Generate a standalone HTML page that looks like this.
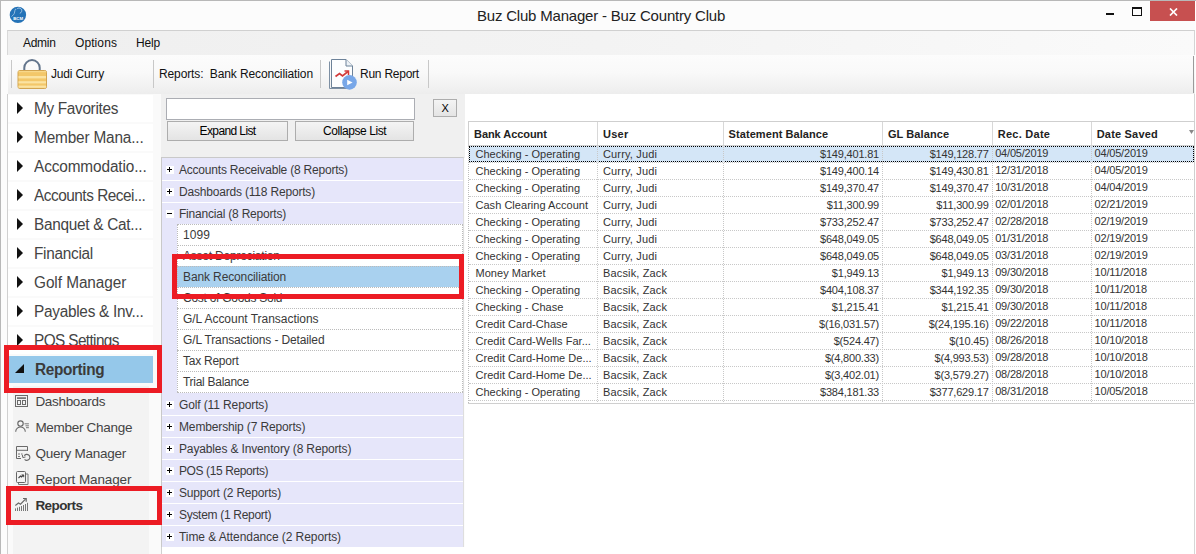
<!DOCTYPE html>
<html><head><meta charset="utf-8"><title>Buz Club Manager - Buz Country Club</title>
<style>
html,body{margin:0;padding:0;}
body{width:1196px;height:554px;position:relative;overflow:hidden;background:#fcfcfc;font-family:"Liberation Sans",sans-serif;color:#000;}
.a{position:absolute;white-space:nowrap;}
.ui{font-family:"Liberation Sans",sans-serif;font-size:12px;line-height:16px;color:#111;}
.nav{left:8px;width:145px;height:27px;background:#fff;}
.navt{left:34px;font-size:16px;color:#444;line-height:27px;}
.tri{width:0;height:0;border-left:6.5px solid #111;border-top:6px solid transparent;border-bottom:6px solid transparent;}
.subt{left:35.4px;font-size:13.5px;color:#444;line-height:20px;}
.cat{left:162px;width:301px;height:21px;background:#e6e6fa;}
.catt{left:179px;font-size:12px;color:#3a3a3a;line-height:21px;}
.pm{left:165.5px;width:8px;height:8px;background:#fff;}
.pm i{position:absolute;left:1.5px;top:3.3px;width:5px;height:1.4px;background:#000;}
.pm b{position:absolute;left:3.3px;top:1.5px;width:1.4px;height:5px;background:#000;}
.ch{left:177px;width:286px;height:20px;background:#fff;border-top:1px dotted #bbb;}
.cht{left:183px;font-size:12px;color:#3a3a3a;line-height:21px;}
.th{font-weight:bold;font-size:11px;color:#222;line-height:24px;top:122px;}
.td{font-size:11px;color:#333;line-height:17px;}
.c0{letter-spacing:0.03px}.c1{letter-spacing:0.15px}.c2,.c3{letter-spacing:-0.2px}.c4,.c5{letter-spacing:-0.2px}
.vl{width:0;border-left:1px dotted #c8c8c8;top:146px;height:256px;}
.hl{height:0;border-top:1px dotted #c8c8c8;left:469px;width:726px;}
.red{border:5px solid #ec1c24;box-sizing:border-box;}
.btn{border:1px solid #adadad;background:linear-gradient(#f4f4f4,#e4e4e4);box-sizing:border-box;}
.btnt{font-size:12px;color:#000;line-height:16px;}
</style></head><body>

<div class="a" style="left:0;top:0;width:1196px;height:1px;background:#b8b8b8"></div>
<div class="a" style="left:0;top:0;width:1px;height:554px;background:#b8b8b8"></div>
<div class="a" style="left:1195px;top:1px;width:1px;height:553px;background:#fff"></div>
<svg class="a" style="left:9px;top:6px" width="18" height="18" viewBox="0 0 18 18">
<circle cx="8.900" cy="8.900" r="8.200" fill="#2573b7"/>
<path d="M7.800 3.200 A2.700 2.700 0 1 1 10.800 7.300" fill="none" stroke="#cfe2f3" stroke-width="0.700"/>
<path d="M6.700 2.800 C5.200 5 6 7.300 4.500 8.700 L2.500 10.500" fill="none" stroke="#a9cbe8" stroke-width="0.800"/>
<text x="9.100" y="13.700" text-anchor="middle" font-family="Liberation Sans, sans-serif" font-weight="bold" font-size="4.300" fill="#fff">BCM</text>
</svg>
<div id="t1" class="a " style="left:477px;top:6px;font-size:15px;line-height:20px;color:#222;letter-spacing:-0.20px">Buz Club Manager - Buz Country Club</div>
<div class="a" style="left:1106px;top:13px;width:8px;height:2px;background:#111"></div>
<div class="a" style="left:1132px;top:7px;width:8px;height:6px;border:1px solid #111;border-top-width:2px;box-sizing:content-box"></div>
<div class="a" style="left:1150px;top:1px;width:45px;height:20px;background:#c75050"></div>
<svg class="a" style="left:1168.5px;top:7.5px" width="9" height="8" viewBox="0 0 9 8"><path d="M1 0.5 L8 7.5 M8 0.5 L1 7.5" stroke="#fff" stroke-width="1.7" fill="none"/></svg>
<div class="a" style="left:7px;top:30px;width:1188px;height:25px;border-right:1px solid #d4d4d4;background:linear-gradient(90deg,#efefef,#f3f3f3 50%,#fafafa);border-top:1px solid #d0d0d0;border-left:1px solid #d9d9d9;box-sizing:border-box"></div>
<div id="t2" class="a ui" style="left:23px;top:35px;letter-spacing:-0.30px">Admin</div>
<div id="t3" class="a ui" style="left:75px;top:35px;letter-spacing:0.09px">Options</div>
<div id="t4" class="a ui" style="left:136px;top:35px;letter-spacing:-0.17px">Help</div>
<div class="a" style="left:8px;top:55px;width:1187px;height:39px;background:linear-gradient(#fcfcfc,#f9f9f9 45%,#ededed)"></div>
<div class="a" style="left:1193px;top:56px;width:1px;height:37px;background:#9a9a9a"></div>
<div class="a" style="left:11px;top:60px;width:1px;height:28px;background:#c8c8c8"></div>
<svg class="a" style="left:17px;top:58px" width="32" height="32" viewBox="0 0 32 32">
<path d="M7.300 13 V9.800 A7.700 7.700 0 0 1 22.700 9.800 V13" fill="none" stroke="#63758c" stroke-width="2"/>
<rect x="1" y="12.500" width="28.500" height="18" rx="1.800" fill="#f3c769" stroke="#d2a450" stroke-width="1"/>
<rect x="1.500" y="18" width="27.500" height="2.400" fill="#fbe3a2"/><rect x="1.500" y="23.200" width="27.500" height="2.200" fill="#fbe3a2"/><rect x="1.500" y="27.600" width="27.500" height="2.200" fill="#fbe3a2"/>
<rect x="1.500" y="13" width="27.500" height="1.200" fill="#f8d88a"/>
</svg>
<div id="t5" class="a ui" style="left:51px;top:66px;letter-spacing:-0.17px">Judi Curry</div>
<div class="a" style="left:153px;top:60px;width:1px;height:28px;background:#c8c8c8"></div>
<div id="t6" class="a ui" style="left:159px;top:66px;letter-spacing:-0.12px">Reports:&nbsp; Bank Reconciliation</div>
<div class="a" style="left:320px;top:60px;width:1px;height:28px;background:#c8c8c8"></div>
<svg class="a" style="left:328px;top:58px" width="32" height="34" viewBox="0 0 32 34">
<path d="M1.500 3.500 V30.500 H21" fill="none" stroke="#7d8fa3" stroke-width="1"/>
<path d="M3.500 1.500 H18 L24.500 8 V29.500 H3.500 Z" fill="#fdfeff" stroke="#6d8299" stroke-width="1"/>
<path d="M18 1.500 V8 H24.500" fill="#eef3f8" stroke="#6d8299" stroke-width="1"/>
<path d="M7.500 18.500 L11.500 15.500 L14.500 18 L20 13.500" fill="none" stroke="#d23a3a" stroke-width="1.700"/>
<path d="M16.500 13 H20.500 V17" fill="none" stroke="#d23a3a" stroke-width="1.500"/>
<circle cx="21.500" cy="24.400" r="7.300" fill="#78a7e8"/>
<path d="M19.200 21.700 L24.600 24.400 L19.200 27.200 Z" fill="#fff"/>
</svg>
<div id="t7" class="a ui" style="left:360px;top:66px;letter-spacing:-0.24px">Run Report</div>
<div class="a" style="left:428px;top:60px;width:1px;height:28px;background:#c8c8c8"></div>
<div class="a" style="left:7px;top:94px;width:1px;height:460px;background:#d0d0d0"></div>
<div class="a" style="left:8px;top:94px;width:153px;height:460px;background:#fafafa"></div>
<div class="a nav" style="top:95px"></div><div class="a tri" style="left:17px;top:102px"></div>
<div id="t8" class="a navt" style="top:95px;transform:scaleX(0.96);transform-origin:0 0;letter-spacing:-0.34px">My Favorites</div>
<div class="a nav" style="top:124px"></div><div class="a tri" style="left:17px;top:131px"></div>
<div id="t9" class="a navt" style="top:124px;transform:scaleX(0.96);transform-origin:0 0;letter-spacing:-0.17px">Member Mana...</div>
<div class="a nav" style="top:153px"></div><div class="a tri" style="left:17px;top:160px"></div>
<div id="t10" class="a navt" style="top:153px;transform:scaleX(0.96);transform-origin:0 0;letter-spacing:-0.12px">Accommodatio...</div>
<div class="a nav" style="top:182px"></div><div class="a tri" style="left:17px;top:189px"></div>
<div id="t11" class="a navt" style="top:182px;transform:scaleX(0.96);transform-origin:0 0;letter-spacing:-0.50px">Accounts Recei...</div>
<div class="a nav" style="top:211px"></div><div class="a tri" style="left:17px;top:218px"></div>
<div id="t12" class="a navt" style="top:211px;transform:scaleX(0.96);transform-origin:0 0;letter-spacing:-0.29px">Banquet &amp; Cat...</div>
<div class="a nav" style="top:240px"></div><div class="a tri" style="left:17px;top:247px"></div>
<div id="t13" class="a navt" style="top:240px;transform:scaleX(0.96);transform-origin:0 0;letter-spacing:-0.29px">Financial</div>
<div class="a nav" style="top:269px"></div><div class="a tri" style="left:17px;top:276px"></div>
<div id="t14" class="a navt" style="top:269px;transform:scaleX(0.96);transform-origin:0 0;letter-spacing:-0.06px">Golf Manager</div>
<div class="a nav" style="top:298px"></div><div class="a tri" style="left:17px;top:305px"></div>
<div id="t15" class="a navt" style="top:298px;transform:scaleX(0.96);transform-origin:0 0;letter-spacing:-0.28px">Payables &amp; Inv...</div>
<div class="a nav" style="top:327px"></div><div class="a tri" style="left:17px;top:334px"></div>
<div id="t16" class="a navt" style="top:327px;transform:scaleX(0.96);transform-origin:0 0;letter-spacing:-0.64px">POS Settings</div>
<div class="a nav" style="top:356px;background:#95c8ea"></div>
<svg class="a" style="left:15px;top:364px" width="9" height="9"><path d="M0 9 H9 V0 Z" fill="#111"/></svg>
<div id="t17" class="a navt" style="top:356px;font-weight:bold;color:#3b3b3b;left:34.6px;transform:scaleX(0.96);transform-origin:0 0;letter-spacing:-0.37px">Reporting</div>
<div class="a" style="left:13px;top:386px;width:136px;height:168px;background:#f3f3f3"></div>
<svg class="a" style="left:15px;top:395px" width="16" height="16" viewBox="0 0 16 16"><rect x="0.5" y="0.5" width="12" height="11" fill="none" stroke="#6a6a6a"/><rect x="2" y="2.300" width="9" height="1.600" fill="#6a6a6a"/><rect x="2.500" y="5.500" width="3" height="4" fill="none" stroke="#6a6a6a"/><rect x="7.500" y="5.500" width="3" height="4" fill="none" stroke="#6a6a6a"/></svg>
<div id="t18" class="a subt" style="top:392px;letter-spacing:-0.31px">Dashboards</div>
<svg class="a" style="left:15px;top:420px" width="16" height="16" viewBox="0 0 16 16"><circle cx="5.500" cy="3.600" r="2.700" fill="none" stroke="#666" stroke-width="1.1"/><path d="M0.700 11.700 C0.700 8.500 3.500 7 5.500 7 S10.300 8.500 10.300 11.700" fill="none" stroke="#666" stroke-width="1.1"/><path d="M9.500 3.800 H13.900 M10.500 5.800 H13.900 M11 7.700 H13.900" stroke="#777" stroke-width="1"/></svg>
<div id="t19" class="a subt" style="top:418px;letter-spacing:-0.29px">Member Change</div>
<svg class="a" style="left:15px;top:446px" width="16" height="16" viewBox="0 0 16 16"><path d="M12.500 5 V0.500 H1.500 V12.500 H6" fill="none" stroke="#6a6a6a"/><path d="M1.500 4.300 H12.500" stroke="#6a6a6a"/><path d="M3 8 H5 M6 8 H7.500 M3 10.500 H5" stroke="#777"/><path d="M9.600 13.300 A3 3 0 1 0 9.300 9.800" fill="none" stroke="#666" stroke-width="1.100"/><path d="M7.300 8.800 L7.800 11.500 L10.500 11" fill="none" stroke="#666" stroke-width="1"/></svg>
<div id="t20" class="a subt" style="top:444px;letter-spacing:-0.25px">Query Manager</div>
<svg class="a" style="left:15px;top:470px" width="16" height="16" viewBox="0 0 16 16"><path d="M3.500 12.500 V14.500 H13 V4 H10.500" fill="none" stroke="#777"/><rect x="1.500" y="1.500" width="9" height="11" rx="1" fill="none" stroke="#666"/><path d="M3.500 8 L5.500 6 L6.500 7 L8.500 5" fill="none" stroke="#444" stroke-width="1.100"/><path d="M6.500 5 H8.700 V7.200" fill="none" stroke="#444"/></svg>
<div id="t21" class="a subt" style="top:470px;letter-spacing:-0.11px">Report Manager</div>
<div class="a" style="left:11px;top:491px;width:138px;height:29px;background:#f3f3f3"></div>
<svg class="a" style="left:15px;top:497px" width="16" height="16" viewBox="0 0 16 16"><path d="M0.500 14 V11.400 M2.500 14 V10.600 M4.500 14 V9.800 M6.500 14 V9 M8.500 14 V8 M10.500 14 V7 M12.500 14 V5.800" stroke="#777" stroke-width="1"/><path d="M0.300 8.500 L3.500 6 L5.500 7.200 L10.500 2.200" fill="none" stroke="#666" stroke-width="1.200"/><path d="M8 1.500 H11.200 V4.700" fill="none" stroke="#666" stroke-width="1.200"/></svg>
<div id="t22" class="a subt" style="top:496px;font-weight:bold;color:#333;letter-spacing:-0.57px">Reports</div>
<div class="a" style="left:161px;top:547px;width:304px;height:7px;background:#fff"></div>
<div class="a" style="left:161px;top:547px;width:1px;height:7px;background:#d0d0d0"></div>
<div class="a" style="left:161px;top:94px;width:304px;height:64px;background:#f0f0f0"></div>
<div class="a" style="left:166px;top:98px;width:249px;height:22px;box-sizing:border-box;border:1px solid #abadb3;background:#fff"></div>
<div class="a btn" style="left:433px;top:99px;width:24px;height:18px"></div>
<div id="t23" class="a btnt" style="left:441.5px;top:100px;font-size:11px">X</div>
<div class="a btn" style="left:167px;top:121px;width:121px;height:20px"></div>
<div id="t24" class="a btnt" style="left:199.5px;top:123px;letter-spacing:-0.60px">Expand List</div>
<div class="a btn" style="left:295px;top:121px;width:119px;height:20px"></div>
<div id="t25" class="a btnt" style="left:322.9px;top:123px;letter-spacing:-0.41px">Collapse List</div>
<div class="a" style="left:161px;top:157px;width:303px;height:390px;background:#fff;border:1px solid #c9c9c9;border-right-color:#dedede;border-bottom:none;box-sizing:border-box"></div>
<div class="a" style="left:162px;top:224px;width:15px;height:169px;background:#e6e6fa"></div>
<div class="a cat" style="top:158px;height:22px"></div>
<div class="a pm" style="top:165.5px"><i></i><b></b></div>
<div id="t26" class="a catt" style="top:159.5px;letter-spacing:-0.21px">Accounts Receivable (8 Reports)</div>
<div class="a cat" style="top:181px;height:21px"></div>
<div class="a pm" style="top:187.5px"><i></i><b></b></div>
<div id="t27" class="a catt" style="top:181.5px;letter-spacing:-0.19px">Dashboards (118 Reports)</div>
<div class="a cat" style="top:203px;height:21px"></div>
<div class="a pm" style="top:209.5px"><i></i></div>
<div id="t28" class="a catt" style="top:203.5px;letter-spacing:-0.21px">Financial (8 Reports)</div>
<div class="a ch" style="top:224px"></div>
<div id="t29" class="a cht" style="top:224.5px;letter-spacing:0.10px">1099</div>
<div class="a ch" style="top:245px"></div>
<div id="t30" class="a cht" style="top:245.5px;letter-spacing:-0.22px">Asset Depreciation</div>
<div class="a ch" style="top:266px;background:#a9d1ef"></div>
<div id="t31" class="a cht" style="top:266.5px;letter-spacing:-0.12px">Bank Reconciliation</div>
<div class="a ch" style="top:287px"></div>
<div id="t32" class="a cht" style="top:287.5px;letter-spacing:-0.27px">Cost of Goods Sold</div>
<div class="a ch" style="top:308px"></div>
<div id="t33" class="a cht" style="top:308.5px;letter-spacing:-0.03px">G/L Account Transactions</div>
<div class="a ch" style="top:329px"></div>
<div id="t34" class="a cht" style="top:329.5px;letter-spacing:-0.13px">G/L Transactions - Detailed</div>
<div class="a ch" style="top:350px"></div>
<div id="t35" class="a cht" style="top:350.5px;letter-spacing:-0.25px">Tax Report</div>
<div class="a ch" style="top:371px"></div>
<div id="t36" class="a cht" style="top:371.5px;letter-spacing:-0.28px">Trial Balance</div>
<div class="a" style="left:177px;top:224px;width:0;height:168px;border-left:1px dotted #bbb"></div>
<div class="a" style="left:177px;top:392px;width:286px;height:0;border-top:1px dotted #bbb"></div>
<div class="a" style="left:462px;top:224px;width:0;height:168px;border-left:1px dotted #bbb"></div>
<div class="a cat" style="top:393px;height:22px"></div>
<div class="a pm" style="top:400.5px"><i></i><b></b></div>
<div id="t37" class="a catt" style="top:394.5px;letter-spacing:-0.12px">Golf (11 Reports)</div>
<div class="a cat" style="top:416px;height:21px"></div>
<div class="a pm" style="top:422.5px"><i></i><b></b></div>
<div id="t38" class="a catt" style="top:416.5px;letter-spacing:-0.14px">Membership (7 Reports)</div>
<div class="a cat" style="top:438px;height:21px"></div>
<div class="a pm" style="top:444.5px"><i></i><b></b></div>
<div id="t39" class="a catt" style="top:438.5px;letter-spacing:-0.14px">Payables &amp; Inventory (8 Reports)</div>
<div class="a cat" style="top:460px;height:21px"></div>
<div class="a pm" style="top:466.5px"><i></i><b></b></div>
<div id="t40" class="a catt" style="top:460.5px;letter-spacing:-0.39px">POS (15 Reports)</div>
<div class="a cat" style="top:482px;height:21px"></div>
<div class="a pm" style="top:488.5px"><i></i><b></b></div>
<div id="t41" class="a catt" style="top:482.5px;letter-spacing:-0.18px">Support (2 Reports)</div>
<div class="a cat" style="top:504px;height:21px"></div>
<div class="a pm" style="top:510.5px"><i></i><b></b></div>
<div id="t42" class="a catt" style="top:504.5px;letter-spacing:-0.30px">System (1 Report)</div>
<div class="a cat" style="top:526px;height:21px"></div>
<div class="a pm" style="top:532.5px"><i></i><b></b></div>
<div id="t43" class="a catt" style="top:526.5px;letter-spacing:-0.08px">Time &amp; Attendance (2 Reports)</div>
<div class="a" style="left:465px;top:94px;width:731px;height:460px;background:#fff"></div>
<div class="a" style="left:1194px;top:94px;width:1px;height:460px;background:#d6d6d6"></div>
<div class="a" style="left:468px;top:121px;width:727px;height:283px;border:1px solid #cfcfcf;border-left:none;box-sizing:border-box"></div>
<div class="a" style="left:468px;top:121px;width:1px;height:25px;background:#cfcfcf"></div>
<div class="a" style="left:468px;top:146px;width:0;height:257px;border-left:1px dotted #bdbdbd"></div>
<div id="t44" class="a th" style="left:474px;letter-spacing:-0.06px">Bank Account</div>
<div id="t45" class="a th" style="left:602.9px;letter-spacing:0.31px">User</div>
<div class="a" style="left:597px;top:122px;width:1px;height:24px;background:#d8d8d8"></div>
<div id="t46" class="a th" style="left:728.6px;letter-spacing:0.07px">Statement Balance</div>
<div class="a" style="left:723px;top:122px;width:1px;height:24px;background:#d8d8d8"></div>
<div id="t47" class="a th" style="left:887.9px;letter-spacing:0.09px">GL Balance</div>
<div class="a" style="left:882px;top:122px;width:1px;height:24px;background:#d8d8d8"></div>
<div id="t48" class="a th" style="left:997.7px;letter-spacing:0.27px">Rec. Date</div>
<div class="a" style="left:992px;top:122px;width:1px;height:24px;background:#d8d8d8"></div>
<div id="t49" class="a th" style="left:1096.7px;letter-spacing:0.20px">Date Saved</div>
<div class="a" style="left:1091px;top:122px;width:1px;height:24px;background:#d8d8d8"></div>
<div class="a" style="left:469px;top:145px;width:726px;height:1px;background:#d0d0d0"></div>
<div class="a" style="left:469px;top:146px;width:725px;height:16px;background:#d4e6f7;border:1px dotted #000;box-sizing:border-box"></div>
<div id="r0c0" class="a td c0" style="left:475.5px;top:146px">Checking - Operating</div>
<div id="r0c1" class="a td c1" style="left:603px;top:146px">Curry, Judi</div>
<div id="r0c2" class="a td c2" style="right:317px;top:146px">$149,401.81</div>
<div id="r0c3" class="a td c3" style="right:207.39999999999998px;top:146px">$149,128.77</div>
<div id="r0c4" class="a td c4" style="left:995.2px;top:145px">04/05/2019</div>
<div id="r0c5" class="a td c5" style="left:1094.6px;top:145px">04/05/2019</div>
<div class="a hl" style="top:162px"></div>
<div id="r1c0" class="a td c0" style="left:475.5px;top:163px">Checking - Operating</div>
<div id="r1c1" class="a td c1" style="left:603px;top:163px">Curry, Judi</div>
<div id="r1c2" class="a td c2" style="right:317px;top:163px">$149,400.14</div>
<div id="r1c3" class="a td c3" style="right:207.39999999999998px;top:163px">$149,430.81</div>
<div id="r1c4" class="a td c4" style="left:995.2px;top:162px">12/31/2018</div>
<div id="r1c5" class="a td c5" style="left:1094.6px;top:162px">04/05/2019</div>
<div class="a hl" style="top:179px"></div>
<div id="r2c0" class="a td c0" style="left:475.5px;top:180px">Checking - Operating</div>
<div id="r2c1" class="a td c1" style="left:603px;top:180px">Curry, Judi</div>
<div id="r2c2" class="a td c2" style="right:317px;top:180px">$149,370.47</div>
<div id="r2c3" class="a td c3" style="right:207.39999999999998px;top:180px">$149,370.47</div>
<div id="r2c4" class="a td c4" style="left:995.2px;top:179px">10/31/2018</div>
<div id="r2c5" class="a td c5" style="left:1094.6px;top:179px">04/04/2019</div>
<div class="a hl" style="top:196px"></div>
<div id="r3c0" class="a td c0" style="left:475.5px;top:197px">Cash Clearing Account</div>
<div id="r3c1" class="a td c1" style="left:603px;top:197px">Curry, Judi</div>
<div id="r3c2" class="a td c2" style="right:317px;top:197px">$11,300.99</div>
<div id="r3c3" class="a td c3" style="right:207.39999999999998px;top:197px">$11,300.99</div>
<div id="r3c4" class="a td c4" style="left:995.2px;top:196px">02/01/2018</div>
<div id="r3c5" class="a td c5" style="left:1094.6px;top:196px">02/21/2019</div>
<div class="a hl" style="top:213px"></div>
<div id="r4c0" class="a td c0" style="left:475.5px;top:214px">Checking - Operating</div>
<div id="r4c1" class="a td c1" style="left:603px;top:214px">Curry, Judi</div>
<div id="r4c2" class="a td c2" style="right:317px;top:214px">$733,252.47</div>
<div id="r4c3" class="a td c3" style="right:207.39999999999998px;top:214px">$733,252.47</div>
<div id="r4c4" class="a td c4" style="left:995.2px;top:213px">02/28/2018</div>
<div id="r4c5" class="a td c5" style="left:1094.6px;top:213px">02/19/2019</div>
<div class="a hl" style="top:230px"></div>
<div id="r5c0" class="a td c0" style="left:475.5px;top:231px">Checking - Operating</div>
<div id="r5c1" class="a td c1" style="left:603px;top:231px">Curry, Judi</div>
<div id="r5c2" class="a td c2" style="right:317px;top:231px">$648,049.05</div>
<div id="r5c3" class="a td c3" style="right:207.39999999999998px;top:231px">$648,049.05</div>
<div id="r5c4" class="a td c4" style="left:995.2px;top:230px">01/31/2018</div>
<div id="r5c5" class="a td c5" style="left:1094.6px;top:230px">02/19/2019</div>
<div class="a hl" style="top:247px"></div>
<div id="r6c0" class="a td c0" style="left:475.5px;top:248px">Checking - Operating</div>
<div id="r6c1" class="a td c1" style="left:603px;top:248px">Curry, Judi</div>
<div id="r6c2" class="a td c2" style="right:317px;top:248px">$648,049.05</div>
<div id="r6c3" class="a td c3" style="right:207.39999999999998px;top:248px">$648,049.05</div>
<div id="r6c4" class="a td c4" style="left:995.2px;top:247px">03/31/2018</div>
<div id="r6c5" class="a td c5" style="left:1094.6px;top:247px">02/19/2019</div>
<div class="a hl" style="top:264px"></div>
<div id="r7c0" class="a td c0" style="left:475.5px;top:265px">Money Market</div>
<div id="r7c1" class="a td c1" style="left:603px;top:265px">Bacsik, Zack</div>
<div id="r7c2" class="a td c2" style="right:317px;top:265px">$1,949.13</div>
<div id="r7c3" class="a td c3" style="right:207.39999999999998px;top:265px">$1,949.13</div>
<div id="r7c4" class="a td c4" style="left:995.2px;top:264px">09/30/2018</div>
<div id="r7c5" class="a td c5" style="left:1094.6px;top:264px">10/11/2018</div>
<div class="a hl" style="top:281px"></div>
<div id="r8c0" class="a td c0" style="left:475.5px;top:282px">Checking - Operating</div>
<div id="r8c1" class="a td c1" style="left:603px;top:282px">Bacsik, Zack</div>
<div id="r8c2" class="a td c2" style="right:317px;top:282px">$404,108.37</div>
<div id="r8c3" class="a td c3" style="right:207.39999999999998px;top:282px">$344,192.35</div>
<div id="r8c4" class="a td c4" style="left:995.2px;top:281px">09/30/2018</div>
<div id="r8c5" class="a td c5" style="left:1094.6px;top:281px">10/11/2018</div>
<div class="a hl" style="top:298px"></div>
<div id="r9c0" class="a td c0" style="left:475.5px;top:299px">Checking - Chase</div>
<div id="r9c1" class="a td c1" style="left:603px;top:299px">Bacsik, Zack</div>
<div id="r9c2" class="a td c2" style="right:317px;top:299px">$1,215.41</div>
<div id="r9c3" class="a td c3" style="right:207.39999999999998px;top:299px">$1,215.41</div>
<div id="r9c4" class="a td c4" style="left:995.2px;top:298px">09/30/2018</div>
<div id="r9c5" class="a td c5" style="left:1094.6px;top:298px">10/11/2018</div>
<div class="a hl" style="top:315px"></div>
<div id="r10c0" class="a td c0" style="left:475.5px;top:316px">Credit Card-Chase</div>
<div id="r10c1" class="a td c1" style="left:603px;top:316px">Bacsik, Zack</div>
<div id="r10c2" class="a td c2" style="right:317px;top:316px">$(16,031.57)</div>
<div id="r10c3" class="a td c3" style="right:207.39999999999998px;top:316px">$(24,195.16)</div>
<div id="r10c4" class="a td c4" style="left:995.2px;top:315px">09/22/2018</div>
<div id="r10c5" class="a td c5" style="left:1094.6px;top:315px">10/11/2018</div>
<div class="a hl" style="top:332px"></div>
<div id="r11c0" class="a td c0" style="left:475.5px;top:333px">Credit Card-Wells Far...</div>
<div id="r11c1" class="a td c1" style="left:603px;top:333px">Bacsik, Zack</div>
<div id="r11c2" class="a td c2" style="right:317px;top:333px">$(524.47)</div>
<div id="r11c3" class="a td c3" style="right:207.39999999999998px;top:333px">$(10.45)</div>
<div id="r11c4" class="a td c4" style="left:995.2px;top:332px">08/26/2018</div>
<div id="r11c5" class="a td c5" style="left:1094.6px;top:332px">10/10/2018</div>
<div class="a hl" style="top:349px"></div>
<div id="r12c0" class="a td c0" style="left:475.5px;top:350px">Credit Card-Home De...</div>
<div id="r12c1" class="a td c1" style="left:603px;top:350px">Bacsik, Zack</div>
<div id="r12c2" class="a td c2" style="right:317px;top:350px">$(4,800.33)</div>
<div id="r12c3" class="a td c3" style="right:207.39999999999998px;top:350px">$(4,993.53)</div>
<div id="r12c4" class="a td c4" style="left:995.2px;top:349px">09/28/2018</div>
<div id="r12c5" class="a td c5" style="left:1094.6px;top:349px">10/10/2018</div>
<div class="a hl" style="top:366px"></div>
<div id="r13c0" class="a td c0" style="left:475.5px;top:367px">Credit Card-Home De...</div>
<div id="r13c1" class="a td c1" style="left:603px;top:367px">Bacsik, Zack</div>
<div id="r13c2" class="a td c2" style="right:317px;top:367px">$(3,402.01)</div>
<div id="r13c3" class="a td c3" style="right:207.39999999999998px;top:367px">$(3,579.27)</div>
<div id="r13c4" class="a td c4" style="left:995.2px;top:366px">08/28/2018</div>
<div id="r13c5" class="a td c5" style="left:1094.6px;top:366px">10/10/2018</div>
<div class="a hl" style="top:383px"></div>
<div id="r14c0" class="a td c0" style="left:475.5px;top:384px">Checking - Operating</div>
<div id="r14c1" class="a td c1" style="left:603px;top:384px">Bacsik, Zack</div>
<div id="r14c2" class="a td c2" style="right:317px;top:384px">$384,181.33</div>
<div id="r14c3" class="a td c3" style="right:207.39999999999998px;top:384px">$377,629.17</div>
<div id="r14c4" class="a td c4" style="left:995.2px;top:383px">08/31/2018</div>
<div id="r14c5" class="a td c5" style="left:1094.6px;top:383px">10/05/2018</div>
<div class="a hl" style="top:400px"></div>
<div class="a vl" style="left:597px"></div>
<div class="a vl" style="left:723px"></div>
<div class="a vl" style="left:882px"></div>
<div class="a vl" style="left:992px"></div>
<div class="a vl" style="left:1091px"></div>
<svg class="a" style="left:1189px;top:130px" width="5" height="4"><path d="M0 0 H5 L2.5 4 Z" fill="#888"/></svg>
<div class="a red" style="left:4px;top:345px;width:158px;height:48px"></div>
<div class="a red" style="left:6px;top:486px;width:156px;height:39px"></div>
<div class="a red" style="left:172px;top:254px;width:292px;height:45px"></div>
</body></html>
